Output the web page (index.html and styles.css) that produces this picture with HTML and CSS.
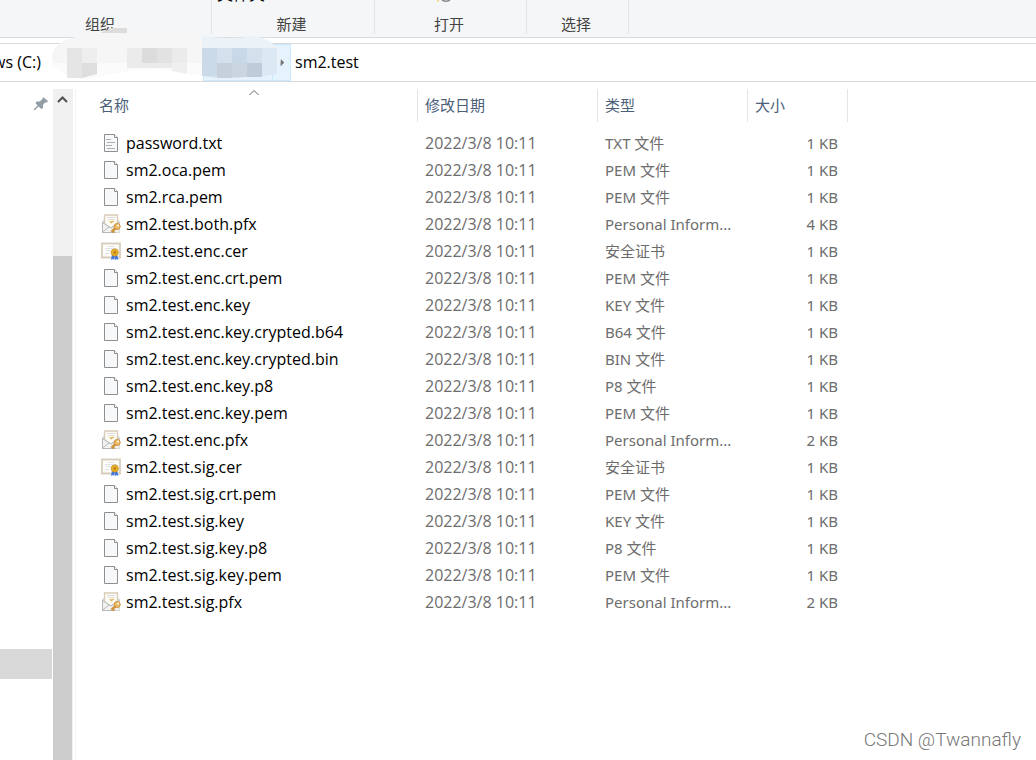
FILE: index.html
```html
<!DOCTYPE html>
<html lang="zh-CN">
<head>
    <meta charset="UTF-8">
    <meta name="viewport" content="width=device-width, initial-scale=1.0">
    <title>sm2.test</title>
    <link rel="stylesheet" href="styles.css">
</head>
<body>
<!-- file icons -->
<svg class="defs" width="0" height="0" aria-hidden="true">
    <symbol id="icon-file" viewBox="0 0 20 20">
        <path d="M3.500 1.500h10l3 3v14h-13z" fill="#f7f8f9" stroke="#8f8f8f"/>
        <path d="M13.500 1.500v3h3" fill="#fff" stroke="#8f8f8f"/>
    </symbol>
    <symbol id="icon-text" viewBox="0 0 20 20">
        <path d="M3.500 1.500h10l3 3v14h-13z" fill="#f7f8f9" stroke="#8f8f8f"/>
        <path d="M13.500 1.500v3h3" fill="#fff" stroke="#8f8f8f"/>
        <path d="M5 6.500h5M6 9.500h8M5 12.500h6M6 15.500h8" stroke="#aab0b3"/>
    </symbol>
    <symbol id="icon-pfx" viewBox="0 0 20 20">
        <path d="M1.500 8l2-2h13l2 2v10.500h-17z" fill="#dedede" stroke="#c4c4c4"/>
        <path d="M3.500 1h13v9l-6.500 4-6.500-4z" fill="#fbfaf5" stroke="#d8ccb8" stroke-width="1.300"/>
        <path d="M6 3.500h8M7 5.500h6" stroke="#dededa"/>
        <path d="M8 7.500l2.500 2 3.500-3z" fill="#e2bb5c"/>
        <path d="M1.500 8.500l8.500 5.500 8.500-5.500v10h-17z" fill="#f2f2f2"/>
        <path d="M1.500 8.500l8.500 5.500 8.500-5.500M1.500 18l6.500-5M1.500 8v10.500h13" stroke="#b8b8b8" fill="none"/>
        <path d="M15 13.500l-4.500 4.500" stroke="#cf9440" stroke-width="2.500"/>
        <path d="M12 17l1.500 1.500" stroke="#cf9440" stroke-width="1.500"/>
        <circle cx="16.200" cy="12.500" r="3" fill="#efbd62" stroke="#c98f3e"/>
        <circle cx="17.200" cy="11.500" r="0.900" fill="#fff"/>
    </symbol>
    <symbol id="icon-cer" viewBox="0 0 20 20">
        <path d="M1 2.500h18v14h-18z" fill="#fcfcfa" stroke="#d8cebe" stroke-width="1.800"/>
        <path d="M7 5.500h6M4 7.500h12M5 9.500h5M4 12.500h4" stroke="#dfe3e6"/>
        <path d="M11 13.500l-1 5.500 1.800-1 1.500 1 .4-4zM16 13.500l1.500 5.500-1.800-1-1.500 1-.4-4z" fill="#3f78dc"/>
        <circle cx="13.800" cy="11.500" r="3.600" fill="#e9b02a" stroke="#c98f1b" stroke-width=".8"/>
        <circle cx="13.800" cy="11.500" r="1.400" fill="#b98014"/>
    </symbol>
</svg>

<header class="ribbon">
    <div class="ribbon-group group-organize">组织</div>
    <div class="ribbon-group group-new"><span class="cut-label">文件夹</span>新建</div>
    <div class="ribbon-group group-open">
        <svg class="cut-icon" width="16" height="3" viewBox="0 0 16 3" aria-hidden="true">
            <path d="M1 0h2v1.500h-2z" fill="#f7d27c"/>
            <path d="M6 0q4 2.500 8 0" fill="none" stroke="#8a8f94" stroke-width="1.500"/>
        </svg>打开
    </div>
    <div class="ribbon-group group-select">选择</div>
</header>

<nav class="address">
    <span class="crumb crumb-drive">ws (C:)</span>
    <span class="crumb-hidden"></span>
    <span class="crumb-active">
        <svg width="18" height="36" viewBox="0 0 18 36" aria-hidden="true"><path d="M8 13.500l4 4-4 4z" fill="#777"/></svg>
    </span>
    <span class="crumb">sm2.test</span>
    <svg class="smudge" width="240" height="60" viewBox="0 0 240 60" aria-hidden="true">
        <path d="M50 5l12-5h15v5z" fill="#dcdcdc"/>
        <path d="M26 9Q90 2 152 8L152 48Q120 40 100 41Q70 43 42 50Q24 54 11 43Q2 38 2 30Q2 14 26 9z" fill="#f6f6f6"/>
        <path d="M2 35h150v13Q120 40 100 41Q70 43 42 50Q24 54 11 43Q4 40 2 35z" fill="#fbfbfb"/>
        <path d="M17 20h15v30h-15z" fill="#e5e5e5"/>
        <path d="M32 20h15v15h-15z" fill="#eeeeee"/>
        <path d="M32 35h15v11l-15 4z" fill="#dedede"/>
        <path d="M77 20h60v20h-60z" fill="#ebebeb"/>
        <path d="M92 20h15v15h-15z" fill="#dcdcdc"/>
        <path d="M107 20h15v15h-15z" fill="#e2e2e2"/>
        <path d="M122 35h15v11l-15-3z" fill="#efefef"/>
        <path d="M152 8Q180 12 206 8Q229 14 231 30Q229 48 210 48Q180 54 152 48z" fill="#ebf2f8"/>
        <path d="M152 20h74v24Q214 50 196 49Q176 52 152 48z" fill="#d4e0eb"/>
        <path d="M152 20h15v28h-15z" fill="#cbdae8"/>
        <path d="M182 20h15v15h-15z" fill="#c8d8e8"/>
        <path d="M167 35h15v15h-15z" fill="#c5d0da"/>
        <path d="M182 35h15v14h-15z" fill="#cad5e0"/>
        <path d="M197 35h15v14h-15z" fill="#becbd9"/>
        <path d="M212 20h15v24l-2 3h-13z" fill="#dce9f5"/>
    </svg>
</nav>

<div class="explorer">
    <aside class="sidebar">
        <svg class="pin" width="14" height="14" viewBox="0 0 14 14" aria-hidden="true">
            <path d="M9 0l5 4-1 1.500h-2l-2 2.500v3l-1.500 1-3-2.500-3.500 3.500h-1v-1l3.500-3.500-2-2.500 1-1.500h3l3-2.500z" fill="#929da5"/>
        </svg>
        <div class="selected-item"></div>
    </aside>
    <div class="scrollbar">
        <svg width="20" height="20" viewBox="0 0 20 20" aria-hidden="true"><path d="M5 13l4.500-4.500 4.500 4.500" fill="none" stroke="#505050" stroke-width="2"/></svg>
        <div class="thumb"></div>
    </div>
    <main class="content">
        <table class="files">
            <thead>
                <tr>
                    <th class="col-name">名称<svg class="sort" width="10" height="6" viewBox="0 0 10 6" aria-hidden="true"><path d="M.5 5l4.500-4.500 4.500 4.500" fill="none" stroke="#666"/></svg></th>
                    <th class="col-date">修改日期</th>
                    <th class="col-type">类型</th>
                    <th class="col-size">大小</th>
                </tr>
            </thead>
            <tbody>
                <tr><td><svg class="icon"><use href="#icon-text"/></svg>password.txt</td><td>2022/3/8 10:11</td><td>TXT 文件</td><td>1 KB</td></tr>
                <tr><td><svg class="icon"><use href="#icon-file"/></svg>sm2.oca.pem</td><td>2022/3/8 10:11</td><td>PEM 文件</td><td>1 KB</td></tr>
                <tr><td><svg class="icon"><use href="#icon-file"/></svg>sm2.rca.pem</td><td>2022/3/8 10:11</td><td>PEM 文件</td><td>1 KB</td></tr>
                <tr><td><svg class="icon"><use href="#icon-pfx"/></svg>sm2.test.both.pfx</td><td>2022/3/8 10:11</td><td>Personal Inform...</td><td>4 KB</td></tr>
                <tr><td><svg class="icon"><use href="#icon-cer"/></svg>sm2.test.enc.cer</td><td>2022/3/8 10:11</td><td>安全证书</td><td>1 KB</td></tr>
                <tr><td><svg class="icon"><use href="#icon-file"/></svg>sm2.test.enc.crt.pem</td><td>2022/3/8 10:11</td><td>PEM 文件</td><td>1 KB</td></tr>
                <tr><td><svg class="icon"><use href="#icon-file"/></svg>sm2.test.enc.key</td><td>2022/3/8 10:11</td><td>KEY 文件</td><td>1 KB</td></tr>
                <tr><td><svg class="icon"><use href="#icon-file"/></svg>sm2.test.enc.key.crypted.b64</td><td>2022/3/8 10:11</td><td>B64 文件</td><td>1 KB</td></tr>
                <tr><td><svg class="icon"><use href="#icon-file"/></svg>sm2.test.enc.key.crypted.bin</td><td>2022/3/8 10:11</td><td>BIN 文件</td><td>1 KB</td></tr>
                <tr><td><svg class="icon"><use href="#icon-file"/></svg>sm2.test.enc.key.p8</td><td>2022/3/8 10:11</td><td>P8 文件</td><td>1 KB</td></tr>
                <tr><td><svg class="icon"><use href="#icon-file"/></svg>sm2.test.enc.key.pem</td><td>2022/3/8 10:11</td><td>PEM 文件</td><td>1 KB</td></tr>
                <tr><td><svg class="icon"><use href="#icon-pfx"/></svg>sm2.test.enc.pfx</td><td>2022/3/8 10:11</td><td>Personal Inform...</td><td>2 KB</td></tr>
                <tr><td><svg class="icon"><use href="#icon-cer"/></svg>sm2.test.sig.cer</td><td>2022/3/8 10:11</td><td>安全证书</td><td>1 KB</td></tr>
                <tr><td><svg class="icon"><use href="#icon-file"/></svg>sm2.test.sig.crt.pem</td><td>2022/3/8 10:11</td><td>PEM 文件</td><td>1 KB</td></tr>
                <tr><td><svg class="icon"><use href="#icon-file"/></svg>sm2.test.sig.key</td><td>2022/3/8 10:11</td><td>KEY 文件</td><td>1 KB</td></tr>
                <tr><td><svg class="icon"><use href="#icon-file"/></svg>sm2.test.sig.key.p8</td><td>2022/3/8 10:11</td><td>P8 文件</td><td>1 KB</td></tr>
                <tr><td><svg class="icon"><use href="#icon-file"/></svg>sm2.test.sig.key.pem</td><td>2022/3/8 10:11</td><td>PEM 文件</td><td>1 KB</td></tr>
                <tr><td><svg class="icon"><use href="#icon-pfx"/></svg>sm2.test.sig.pfx</td><td>2022/3/8 10:11</td><td>Personal Inform...</td><td>2 KB</td></tr>
            </tbody>
        </table>
    </main>
</div>
<div class="watermark">CSDN @Twannafly</div>
</body>
</html>
```

FILE: styles.css
```css
* {
    box-sizing: border-box;
}

body {
    margin: 0;
    height: 100vh;
    display: flex;
    flex-direction: column;
    overflow: hidden;
    background-color: #fff;
    font-family: "Noto Sans", "Noto Sans CJK SC", sans-serif;
    font-size: 15px;
    color: #000;
}

.defs {
    position: absolute;
}

/* ribbon */
.ribbon {
    display: flex;
    height: 38px;
    padding-bottom: 3px;
    background-color: #f5f6f7;
    border-bottom: 1px solid #dadbdc;
    color: #444;
    font-family: "Noto Sans CJK SC", sans-serif;
}

.ribbon-group {
    position: relative;
    padding-top: 14px;
    padding-right: 3px;
    line-height: 20px;
    text-align: center;
    border-right: 1px solid #e2e3e4;
    overflow: hidden;
}

.group-organize {
    width: 212px;
    padding-right: 11px;
}

.group-new {
    width: 163px;
}

.group-open {
    width: 152px;
}

.group-select {
    width: 102px;
}

.cut-label {
    position: absolute;
    left: 5px;
    top: -17px;
    font-size: 16px;
    line-height: 20px;
    color: #000;
}

.cut-icon {
    position: absolute;
    left: 61px;
    top: 0;
}

/* address bar */
.address {
    position: relative;
    display: flex;
    align-items: center;
    height: 39px;
    margin-top: 5px;
    border-top: 1px solid #d9d9d9;
    border-bottom: 1px solid #d9d9d9;
}

.crumb {
    padding-bottom: 1px;
    font-family: "Open Sans", sans-serif;
    font-size: 16px;
}

.crumb-drive {
    display: flex;
    justify-content: flex-end;
    width: 41px;
    white-space: nowrap;
}

.crumb-hidden {
    width: 162px;
}

.crumb-active {
    display: flex;
    justify-content: flex-end;
    width: 88px;
    height: 37px;
    margin-right: 4px;
    background-color: #e5f3ff;
    border: 1px solid #cce8ff;
}

.crumb-active svg {
    border-left: 1px solid #cce8ff;
}

.smudge {
    position: absolute;
    left: 50px;
    top: -16px;
}

/* main area */
.explorer {
    flex: 1;
    display: flex;
    min-height: 0;
    padding-top: 7px;
}

.sidebar {
    display: flex;
    flex-direction: column;
    align-items: flex-end;
    width: 53px;
    padding: 8px 1px 81px 0;
}

.pin {
    margin-right: 4px;
}

.selected-item {
    width: 100%;
    height: 30px;
    margin-top: auto;
    background-color: #d9d9d9;
}

.scrollbar {
    display: flex;
    flex-direction: column;
    width: 20px;
    margin-right: 2px;
    padding-right: 1px;
    background-color: #f0f0f0;
}

.thumb {
    flex: 1;
    margin-top: 147px;
    background-color: #cdcdcd;
}

.content {
    flex: 1;
    border-left: 1px solid #f3f3f3;
}

.files {
    table-layout: fixed;
    width: 772px;
    border-spacing: 0;
}

.files th {
    position: relative;
    height: 33px;
    padding: 0 7px 3px;
    border-right: 1px solid #e5e5e5;
    text-align: left;
    font-family: "Noto Sans CJK SC", sans-serif;
    font-weight: 400;
    color: #4c607a;
}

.files .col-name {
    width: 342px;
    padding-left: 23px;
}

.col-date {
    width: 180px;
}

.col-type {
    width: 150px;
}

.col-size {
    width: 100px;
}

.sort {
    position: absolute;
    left: 173px;
    top: 1px;
}

.files tbody::before {
    content: "";
    display: block;
    height: 8px;
}

.files td {
    height: 27px;
    padding: 0 7px 2px;
    line-height: 20px;
    white-space: nowrap;
    color: #6d6d6d;
}

.files td:nth-child(-n+2) {
    font-family: "Open Sans", sans-serif;
    font-size: 16px;
}

.files td:first-child {
    padding-left: 25px;
    color: #000;
}

.files td:last-child {
    padding-right: 10px;
    text-align: right;
}

.icon {
    width: 20px;
    height: 20px;
    margin-right: 5px;
    vertical-align: -4px;
}

.watermark {
    position: absolute;
    right: 15px;
    bottom: 9px;
    font-family: Roboto, sans-serif;
    font-size: 19px;
    font-weight: 300;
    line-height: 22px;
    color: #777;
}
```
